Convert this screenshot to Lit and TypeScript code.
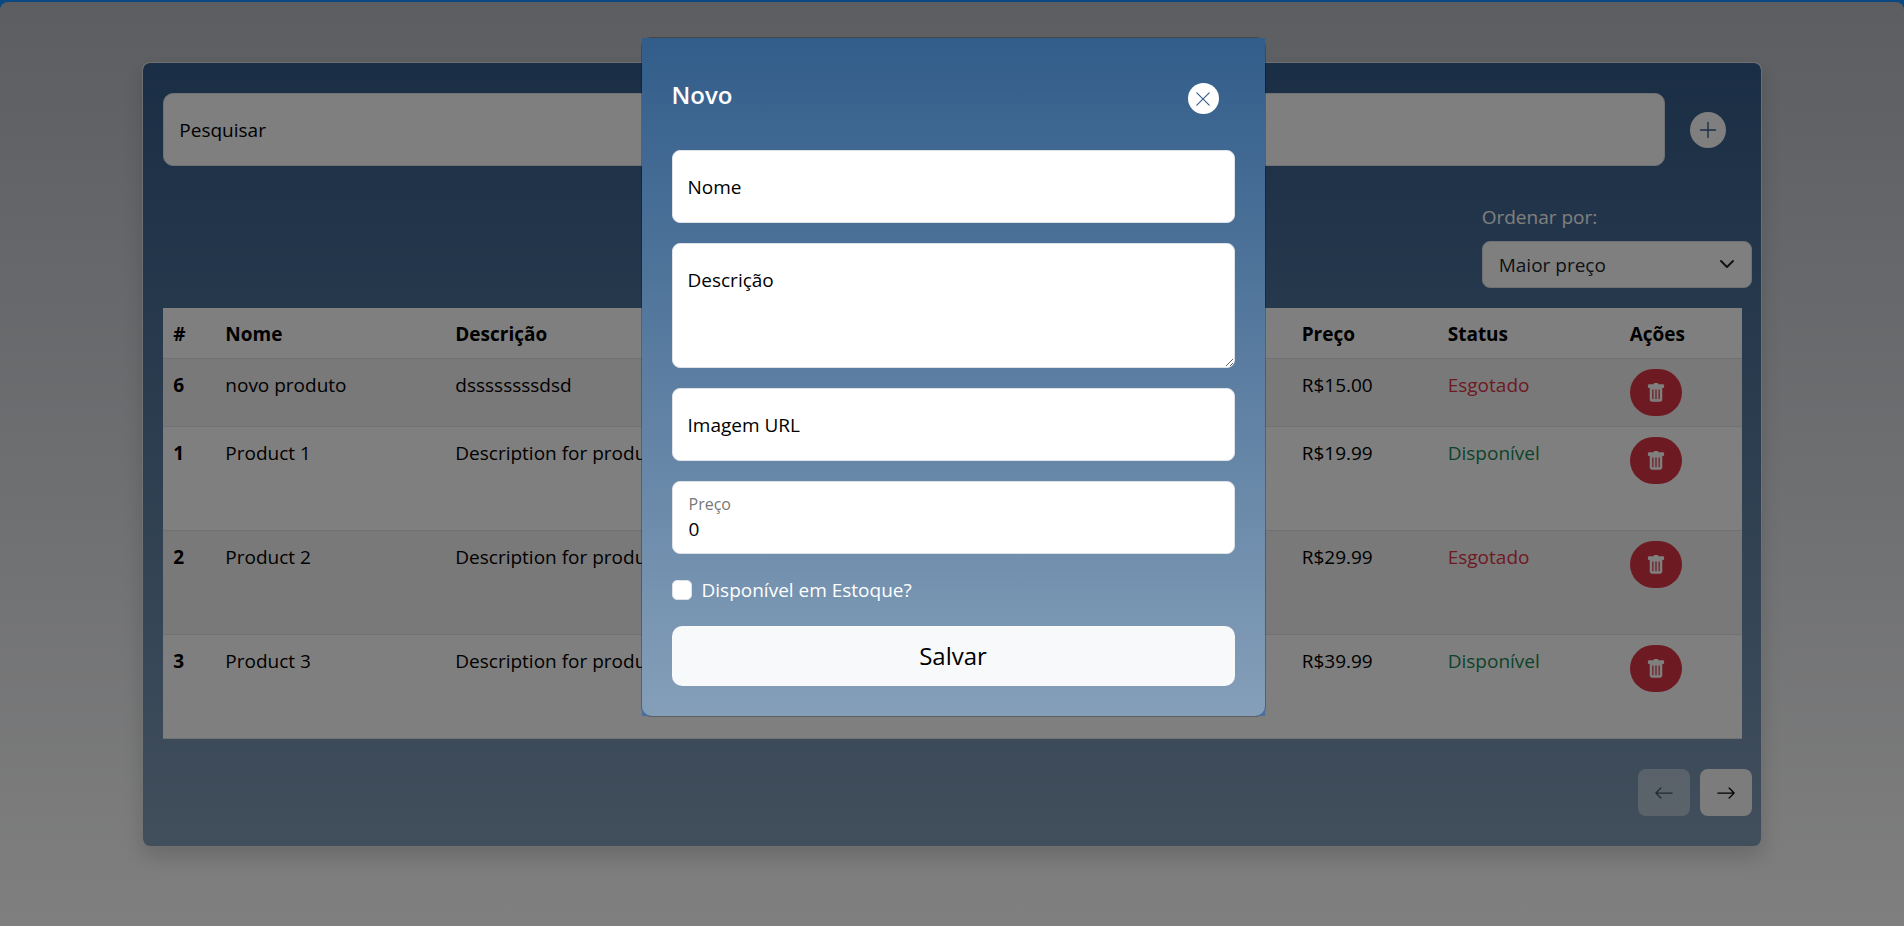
import { LitElement, html, css, svg } from "lit";
import { customElement, state } from "lit/decorators.js";

interface Produto {
  id: number;
  nome: string;
  descricao: string;
  preco: string;
  disponivel: boolean;
}

const PRODUTOS: Produto[] = [
  { id: 6, nome: "novo produto", descricao: "dssssssssdsd", preco: "R$15.00", disponivel: false },
  { id: 1, nome: "Product 1", descricao: "Description for product 1", preco: "R$19.99", disponivel: true },
  { id: 2, nome: "Product 2", descricao: "Description for product 2", preco: "R$29.99", disponivel: false },
  { id: 3, nome: "Product 3", descricao: "Description for product 3", preco: "R$39.99", disponivel: true },
];

const icon = (size: number, body: unknown) => html`
  <svg width=${size} height=${size} viewBox="0 0 16 16" fill="currentColor" aria-hidden="true">${body}</svg>
`;

const TRASH = svg`<path d="M2.5 1a1 1 0 0 0-1 1v1a1 1 0 0 0 1 1H3v9a2 2 0 0 0 2 2h6a2 2 0 0 0 2-2V4h.5a1 1 0 0 0 1-1V2a1 1 0 0 0-1-1H10a1 1 0 0 0-1-1H7a1 1 0 0 0-1 1zm3 4a.5.5 0 0 1 .5.5v7a.5.5 0 0 1-1 0v-7a.5.5 0 0 1 .5-.5M8 5a.5.5 0 0 1 .5.5v7a.5.5 0 0 1-1 0v-7A.5.5 0 0 1 8 5m3 .5v7a.5.5 0 0 1-1 0v-7a.5.5 0 0 1 1 0"/>`;
const PLUS = svg`<path d="M8 2a.5.5 0 0 1 .5.5v5h5a.5.5 0 0 1 0 1h-5v5a.5.5 0 0 1-1 0v-5h-5a.5.5 0 0 1 0-1h5v-5A.5.5 0 0 1 8 2"/>`;
const CLOSE = svg`<path d="M2.146 2.854a.5.5 0 1 1 .708-.708L8 7.293l5.146-5.147a.5.5 0 0 1 .708.708L8.707 8l5.147 5.146a.5.5 0 0 1-.708.708L8 8.707l-5.146 5.147a.5.5 0 0 1-.708-.708L7.293 8z"/>`;
const LEFT = svg`<path fill-rule="evenodd" d="M15 8a.5.5 0 0 0-.5-.5H2.707l3.147-3.146a.5.5 0 1 0-.708-.708l-4 4a.5.5 0 0 0 0 .708l4 4a.5.5 0 0 0 .708-.708L2.707 8.5H14.5A.5.5 0 0 0 15 8"/>`;
const RIGHT = svg`<path fill-rule="evenodd" d="M1 8a.5.5 0 0 1 .5-.5h11.793l-3.147-3.146a.5.5 0 0 1 .708-.708l4 4a.5.5 0 0 1 0 .708l-4 4a.5.5 0 0 1-.708-.708L13.293 8.5H1.5A.5.5 0 0 1 1 8"/>`;
const CHEVRON = svg`<path fill="none" stroke="currentColor" stroke-linecap="round" stroke-linejoin="round" stroke-width="2" d="m2 5 6 6 6-6"/>`;

@customElement("app-root")
export class AppRoot extends LitElement {
  @state() private aberto = true;

  static styles = css`
    :host {
      display: block;
      min-height: 100vh;
      padding-top: 2px;
      box-sizing: border-box;
      background: #1591ff;
      font-family: "Segoe UI", "Open Sans", "Noto Sans", sans-serif;
      font-size: 19px;
      line-height: 30px;
      color: #000;
    }
    *, *::before, *::after { box-sizing: border-box; }
    button, input, select, textarea { font: inherit; color: inherit; }
    button { cursor: pointer; padding: 0; border: 0; }
    svg { display: block; flex: none; }

    .page {
      min-height: calc(100vh - 2px);
      padding: 60px 0;
      border-radius: 8px 8px 0 0;
      background: linear-gradient(#b8bcc4, #ffffff);
    }
    .card {
      width: calc(85% + 1px);
      margin: 0 auto;
      padding: 30px 9px 30px 20px;
      border: 1px solid rgba(222, 226, 230, 0.85);
      border-bottom-color: rgba(0, 0, 0, 0.1);
      border-radius: 8px;
      background: linear-gradient(#345c8a, #839eb9) padding-box;
      box-shadow: 0 10px 20px rgba(0, 0, 0, 0.15);
    }
    .search { display: flex; align-items: center; gap: 25px; padding-right: 26px; }
    .field { position: relative; flex: 1; display: block; }
    .control {
      display: block;
      width: 100%;
      height: 73px;
      margin: 0;
      padding: 30px 16px 8px;
      border: 1px solid #dee2e6;
      border-radius: 8px;
      background: #fff;
      outline: 0;
    }
    .search .control { border-radius: 10px; }
    .area { height: 125px; resize: vertical; }
    .caption {
      position: absolute;
      top: 22px;
      left: 16px;
      pointer-events: none;
    }
    .caption.small { top: 8px; left: 17px; font-size: 16px; color: #777; }
    .round {
      display: grid;
      place-items: center;
      width: 36px;
      height: 36px;
      border-radius: 50%;
      background: #fff;
      color: #345c8a;
    }
    .round.close { width: 31px; height: 31px; }

    .order {
      display: flex;
      flex-direction: column;
      gap: 9px;
      width: 270px;
      margin: 36px 0 20px auto;
      color: #fff;
    }
    .select { position: relative; color: #212529; }
    .select svg { position: absolute; right: 17px; top: 15px; pointer-events: none; }
    .select select {
      display: block;
      width: 100%;
      height: 47px;
      padding: 0 44px 0 16px;
      border: 1px solid #dee2e6;
      border-radius: 8px;
      background: #fff;
      appearance: none;
    }

    .frame { padding-right: 10px; }
    table { width: 100%; border-collapse: separate; border-spacing: 0; table-layout: fixed; background: #fff; }
    th, td {
      padding: 11px 10px 9px;
      text-align: left;
      vertical-align: top;
      border-bottom: 1px solid #dee2e6;
    }
    th { font-weight: 700; }
    tbody td.action { padding-top: 10px; }
    tbody tr { height: 104px; }
    tbody tr:first-child { height: 68px; }
    tbody tr:nth-child(odd) > * { background: #f2f2f2; }
    .c-id { width: 52px; }
    .c-nome { width: 230px; }
    .c-preco { width: 146px; }
    .c-status { width: 182px; }
    .c-acoes { width: 122px; }
    .ok { color: #198754; }
    .off { color: #dc3545; }
    .trash {
      display: grid;
      place-items: center;
      width: 52px;
      height: 47px;
      border-radius: 24px;
      background: #dc3545;
      color: #fff;
    }
    .pager { display: flex; justify-content: flex-end; gap: 10px; margin-top: 30px; }
    .pager button {
      display: grid;
      place-items: center;
      width: 52px;
      height: 47px;
      border-radius: 8px;
      background: #f8f9fa;
      color: #000;
    }
    .pager button:disabled { opacity: 0.45; cursor: default; }

    .backdrop {
      position: fixed;
      inset: 0;
      display: flex;
      justify-content: center;
      align-items: flex-start;
      padding: 37px 0 0 2px;
      background: rgba(0, 0, 0, 0.5);
    }
    .dialog {
      width: 625px;
      border: 1px solid rgba(0, 0, 0, 0.25);
      border-radius: 10px;
    }
    .sheet { background: linear-gradient(#325d8a 50%, #4a6f9a); }
    .form {
      display: flex;
      flex-direction: column;
      gap: 20px;
      padding: 38px 30px 30px;
      border-radius: 0 0 10px 10px;
      background: linear-gradient(#325d8a, #859fb9);
    }
    .head { display: flex; justify-content: space-between; margin-bottom: 16px; padding-right: 16px; color: #fff; }
    h1 { margin: 0; font-size: 24px; line-height: 38px; font-weight: 600; }
    .head .round { margin-top: 7px; }
    .check { display: flex; align-items: center; gap: 10px; height: 32px; color: #fff; }
    .check input {
      appearance: none;
      width: 20px;
      height: 20px;
      margin: 0;
      border: 1px solid #dee2e6;
      border-radius: 5px;
      background: #fff;
    }
    .save { height: 60px; border-radius: 10px; background: #f8f9fa; font-size: 24px; }
  `;

  render() {
    return html`
      <main class="page">
        <section class="card">
          <div class="search">
            <label class="field">
              <input class="control" type="search" />
              <span class="caption">Pesquisar</span>
            </label>
            <button class="round" aria-label="Novo produto" @click=${() => (this.aberto = true)}>${icon(22, PLUS)}</button>
          </div>

          <div class="order">
            <label for="ordem">Ordenar por:</label>
            <div class="select">
              <select id="ordem">
                <option>Maior preço</option>
                <option>Menor preço</option>
              </select>
              ${icon(16, CHEVRON)}
            </div>
          </div>

          <div class="frame">
            <table>
              <thead>
                <tr>
                  <th class="c-id">#</th>
                  <th class="c-nome">Nome</th>
                  <th>Descrição</th>
                  <th class="c-preco">Preço</th>
                  <th class="c-status">Status</th>
                  <th class="c-acoes">Ações</th>
                </tr>
              </thead>
              <tbody>
                ${PRODUTOS.map(
                  (p) => html`
                    <tr>
                      <th scope="row">${p.id}</th>
                      <td>${p.nome}</td>
                      <td>${p.descricao}</td>
                      <td>${p.preco}</td>
                      <td class=${p.disponivel ? "ok" : "off"}>${p.disponivel ? "Disponível" : "Esgotado"}</td>
                      <td class="action"><button class="trash" aria-label="Excluir">${icon(20, TRASH)}</button></td>
                    </tr>
                  `
                )}
              </tbody>
            </table>
          </div>

          <nav class="pager">
            <button disabled aria-label="Anterior">${icon(20, LEFT)}</button>
            <button aria-label="Próxima">${icon(20, RIGHT)}</button>
          </nav>
        </section>
      </main>
      ${this.aberto ? this.renderDialog() : null}
    `;
  }

  private renderDialog() {
    return html`
      <div class="backdrop">
        <div class="dialog" role="dialog" aria-modal="true" aria-labelledby="titulo">
          <div class="sheet">
            <form class="form" @submit=${(e: Event) => e.preventDefault()}>
              <div class="head">
                <h1 id="titulo">Novo</h1>
                <button class="round close" type="button" aria-label="Fechar" @click=${() => (this.aberto = false)}>
                  ${icon(18, CLOSE)}
                </button>
              </div>
              <label class="field">
                <input class="control" type="text" />
                <span class="caption">Nome</span>
              </label>
              <label class="field">
                <textarea class="control area"></textarea>
                <span class="caption">Descrição</span>
              </label>
              <label class="field">
                <input class="control" type="text" />
                <span class="caption">Imagem URL</span>
              </label>
              <label class="field">
                <input class="control" type="text" inputmode="decimal" value="0" />
                <span class="caption small">Preço</span>
              </label>
              <label class="check"><input type="checkbox" />Disponível em Estoque?</label>
              <button class="save" type="submit">Salvar</button>
            </form>
          </div>
        </div>
      </div>
    `;
  }
}
